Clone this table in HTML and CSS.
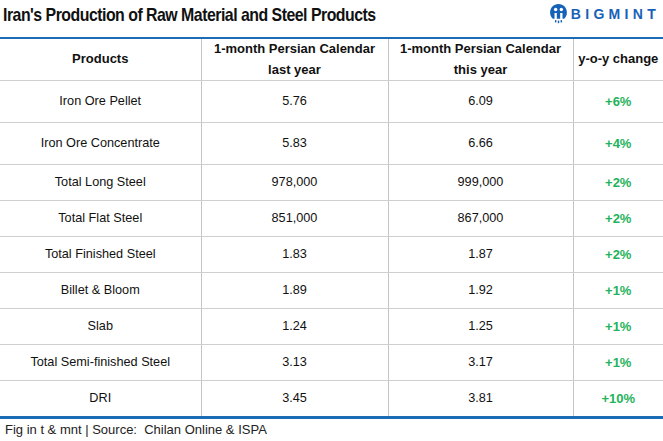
FILE: index.html
```html
<!DOCTYPE html>
<html>
<head>
<meta charset="utf-8">
<link rel="stylesheet" href="styles.css">
</head>
<body>
<div class="page">
  <header class="top">
    <h1 class="title">Iran's Production of Raw Material and Steel Products</h1>
    <div class="logo">
      <svg class="logo-icon" width="19" height="21" viewBox="0 0 18 20">
        <path d="M9 1 C4.2 1 1 4.6 1 9 C1 11.5 2 13.6 3.6 15 L5.2 15 L5.2 9.5 L7.4 9.5 L7.4 15 L10.6 15 L10.6 9.5 L12.8 9.5 L12.8 15 L14.4 15 C16 13.6 17 11.5 17 9 C17 4.6 13.8 1 9 1 Z" fill="#1662b8"/>
        <circle cx="6.3" cy="6.2" r="1.6" fill="#fff"/>
        <circle cx="11.7" cy="6.2" r="1.6" fill="#fff"/>
        <rect x="5.6" y="16.3" width="1.4" height="2.2" fill="#1662b8"/>
        <rect x="8.3" y="16.8" width="1.4" height="2.4" fill="#1662b8"/>
        <rect x="11" y="16.3" width="1.4" height="2.2" fill="#1662b8"/>
      </svg>
      <span class="logo-text">BIGMINT</span>
    </div>
  </header>
  <table class="data">
    <colgroup>
      <col class="c1"><col class="c2"><col class="c3"><col class="c4">
    </colgroup>
    <thead>
      <tr class="head">
        <th>Products</th>
        <th>1-month Persian Calendar<br>last year</th>
        <th>1-month Persian Calendar<br>this year</th>
        <th>y-o-y change</th>
      </tr>
    </thead>
    <tbody>
      <tr class="tall"><td>Iron Ore Pellet</td><td>5.76</td><td>6.09</td><td class="chg">+6%</td></tr>
      <tr class="tall"><td>Iron Ore Concentrate</td><td>5.83</td><td>6.66</td><td class="chg">+4%</td></tr>
      <tr><td>Total Long Steel</td><td>978,000</td><td>999,000</td><td class="chg">+2%</td></tr>
      <tr><td>Total Flat Steel</td><td>851,000</td><td>867,000</td><td class="chg">+2%</td></tr>
      <tr><td>Total Finished Steel</td><td>1.83</td><td>1.87</td><td class="chg">+2%</td></tr>
      <tr><td>Billet &amp; Bloom</td><td>1.89</td><td>1.92</td><td class="chg">+1%</td></tr>
      <tr><td>Slab</td><td>1.24</td><td>1.25</td><td class="chg">+1%</td></tr>
      <tr><td>Total Semi-finished Steel</td><td>3.13</td><td>3.17</td><td class="chg">+1%</td></tr>
      <tr><td>DRI</td><td>3.45</td><td>3.81</td><td class="chg">+10%</td></tr>
    </tbody>
  </table>
  <p class="note">Fig in t &amp; mnt | Source:&nbsp; Chilan Online &amp; ISPA</p>
</div>
</body>
</html>
```

FILE: styles.css
```css
html, body {
  margin: 0;
  padding: 0;
  background: #fff;
}
.page {
  width: 663px;
  font-family: "Liberation Sans", Arial, sans-serif;
  color: #111;
}
.top {
  height: 37px;
  display: flex;
  align-items: center;
  justify-content: space-between;
  padding: 0 5px 0 3px;
  box-sizing: border-box;
}
.title {
  margin: 0;
  font-family: "Liberation Sans", Arial, sans-serif;
  font-size: 19px;
  font-weight: bold;
  letter-spacing: -0.6px;
  color: #111;
  white-space: nowrap;
  transform: scaleX(0.835);
  transform-origin: left center;
  position: relative;
  top: -4px;
}
.logo {
  display: flex;
  align-items: center;
  gap: 3px;
  position: relative;
  top: -5px;
  left: -2px;
}
.logo-icon {
  display: block;
}
.logo-text {
  font-size: 14px;
  font-weight: bold;
  letter-spacing: 4.3px;
  margin-right: -4px;
  color: #1662b8;
}
.data {
  width: 663px;
  border-collapse: collapse;
  table-layout: fixed;
  border-top: 2px solid #1a6cb5;
  border-bottom: 3px solid #1a6cb5;
}
.c1 { width: 201px; }
.c2 { width: 187px; }
.c3 { width: 185px; }
.c4 { width: 90px; }
.data th, .data td {
  padding: 0;
  text-align: center;
  vertical-align: middle;
  border-left: 1px solid #c4c4c4;
  border-bottom: 1px solid #cfcfcf;
}
.data th:first-child, .data td:first-child {
  border-left: none;
}
.data th {
  font-size: 13px;
  font-weight: bold;
  line-height: 20.5px;
  height: 41px;
}
.data td {
  font-size: 12.7px;
  line-height: 15px;
  height: 35px;
}
.data tr.tall td {
  height: 41px;
}
.data tbody tr:last-child td {
  border-bottom: none;
}
.data td.chg {
  color: #1fb35b;
  font-weight: bold;
  font-size: 13px;
}
.note {
  margin: 3px 0 0 5px;
  font-size: 13px;
  color: #222;
}
```
